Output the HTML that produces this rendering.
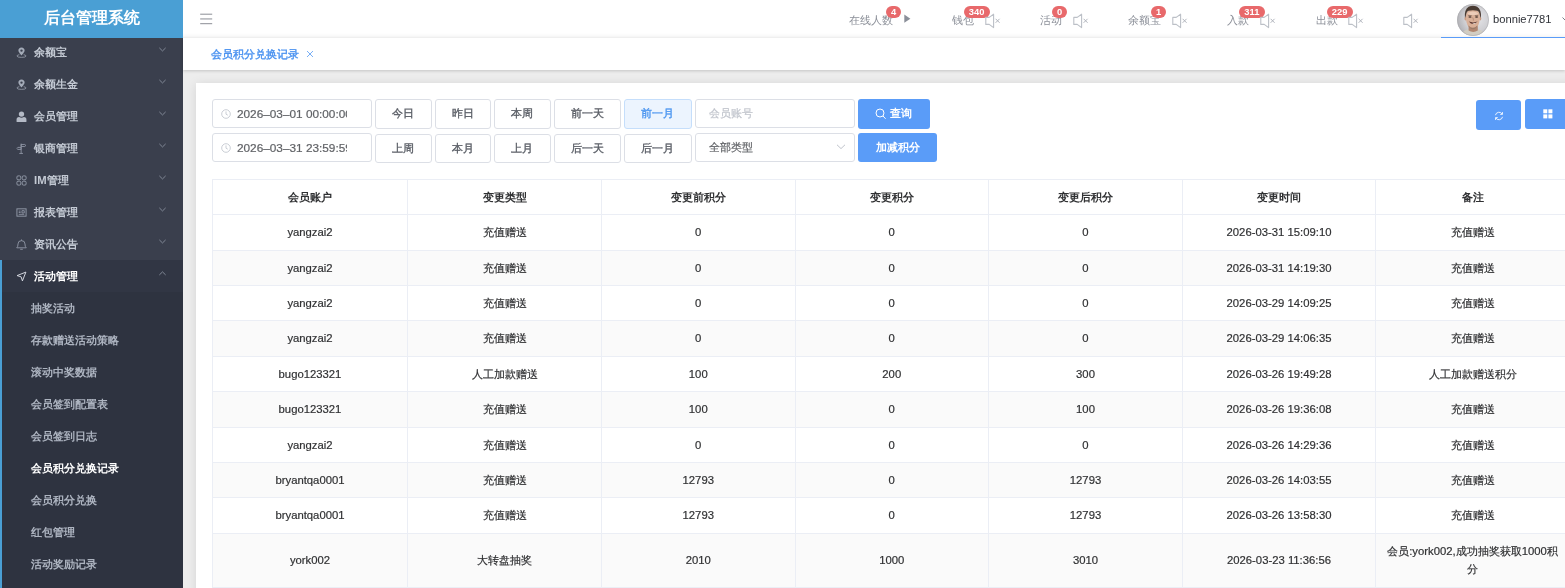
<!DOCTYPE html>
<html lang="zh">
<head>
<meta charset="utf-8">
<title>后台管理系统</title>
<style>
*{box-sizing:border-box;margin:0;padding:0}
html,body{width:1565px;height:588px;overflow:hidden;background:#ededed;font-family:"Liberation Sans",sans-serif;font-size:11.3px;color:#303133}
.abs{position:absolute}
.td,.inp{-webkit-text-stroke:0.2px}
#root{position:absolute;left:0;top:0;width:1565px;height:588px;overflow:hidden;will-change:transform;transform:translateZ(0)}
/* sidebar */
#side{position:absolute;left:0;top:0;width:183px;height:588px;background:#3a3f4d;overflow:hidden}
#logo{position:absolute;left:0;top:0;width:183px;z-index:2;height:38px;background:#4a9fd4;color:#fff;font-weight:bold;font-size:16px;line-height:36px;text-align:center}
#menu{position:absolute;left:0;top:36px;width:183px}
.mi{position:relative;height:32px;line-height:33px;color:#c3c9d3;font-weight:bold;font-size:11.3px;padding-left:34px}
.mi svg.ic{position:absolute;left:15.5px;top:10.5px;width:11px;height:11px}
.mi svg.ar{position:absolute;left:157.8px;top:9px;width:9px;height:9px}
.mi.act{color:#fff;background:#313644}
#actbar{position:absolute;left:0;top:224px;width:2px;height:400px;background:#4a9fd4;z-index:3}
#sub{background:#2e3340;height:400px}
.si{height:32px;line-height:33px;padding-left:31px;color:#adb4c0;font-weight:bold;font-size:11.3px}
.si.on{color:#fff}
/* topbar */
#top{position:absolute;left:183px;top:0;width:1382px;height:38px;background:linear-gradient(to bottom,#fff 0,#fff 33px,#f6f6f6 37.5px,#fafafa 38px)}
#tabs{position:absolute;left:183px;top:38px;width:1382px;height:32px;background:#fff;box-shadow:0 1px 3px rgba(0,0,0,.18)}
#tabs .t{position:absolute;left:28px;top:0;line-height:32px;color:#4a92f0;-webkit-text-stroke:0.4px #4a92f0;font-size:11.3px}
.tx{position:absolute;top:0;line-height:40px;color:#8c9099;font-size:11.3px;white-space:nowrap}
.bd{position:absolute;top:5.8px;height:12.2px;border-radius:6.1px;background:#e8696b;color:#fff;font-size:9.4px;font-weight:bold;line-height:11.6px;text-align:center;padding:0 4px}
/* card */
#card{position:absolute;left:196px;top:83px;width:1400px;height:520px;background:#fff;box-shadow:0 1px 10px rgba(0,0,0,.1)}
.inp{position:absolute;height:28px;border:1px solid #dcdfe6;border-radius:3px;background:#fff;font-size:11.3px;line-height:26px;color:#606266;white-space:nowrap;overflow:hidden}
.btn{position:absolute;height:28px;border:1px solid #dcdfe6;border-radius:3px;background:#fff;font-size:11.3px;line-height:26px;color:#5a5e66;text-align:center;-webkit-text-stroke:0.35px #5a5e66}
.btn.sel{color:#4a95f0;background:#ecf4fe;border-color:#c5defb;-webkit-text-stroke:0.35px #4a95f0}
.pbtn{position:absolute;border-radius:3px;background:#5a9cf8;color:#fff;font-weight:bold;font-size:11.3px;text-align:center}
table{position:absolute;left:212px;top:180px;border-collapse:collapse;table-layout:fixed;width:1356px}
td,th{border:1px solid #ebeef5;text-align:center;font-size:11.3px;color:#303133;padding:0;font-weight:normal;height:35.3px}
th{font-weight:bold;height:34px}
tr.s td{background:#fafafa}

#tb{position:absolute;left:212px;top:0;width:1360px;height:588px}
.tr{position:absolute;left:0;width:1360px}
.td{position:absolute;top:0;height:100%;border:1px solid #ebeef5;display:flex;align-items:center;justify-content:center;text-align:center;font-size:11.3px;color:#303133;line-height:18px;padding:0 9px 2px}
.tr.th .td{font-weight:bold;padding-bottom:0;-webkit-text-stroke:0}
.tr.s .td{background:#fafafa}
.tr.k .td{padding-bottom:0}
</style>
</head>
<body>
<div id="root">
<div id="side">
<div id="logo">后台管理系统</div>
<div id="menu">
<div class="mi"><svg class="ic" viewBox="0 0 12 12"><path d="M6 0.6 C3.9 0.6 2.6 2.1 2.6 3.9 C2.6 5.9 6 9.3 6 9.3 C6 9.3 9.4 5.9 9.4 3.9 C9.4 2.1 8.1 0.6 6 0.6 Z M6 2.6 A1.3 1.3 0 1 1 6 5.2 A1.3 1.3 0 1 1 6 2.6 Z" fill="#a4abb8" fill-rule="evenodd"/><path d="M3.6 8.4 Q1 8.9 1 9.9 Q1 11.3 6 11.3 Q11 11.3 11 9.9 Q11 8.9 8.4 8.4" fill="none" stroke="#a4abb8" stroke-width="0.8"/></svg>余额宝<svg class="ar" viewBox="0 0 10 10"><path d="M1.5 3.2 L5 6.6 L8.5 3.2" fill="none" stroke="#858c9a" stroke-width="1.05"/></svg></div>
<div class="mi"><svg class="ic" viewBox="0 0 12 12"><path d="M6 0.6 C3.9 0.6 2.6 2.1 2.6 3.9 C2.6 5.9 6 9.3 6 9.3 C6 9.3 9.4 5.9 9.4 3.9 C9.4 2.1 8.1 0.6 6 0.6 Z M6 2.6 A1.3 1.3 0 1 1 6 5.2 A1.3 1.3 0 1 1 6 2.6 Z" fill="#a4abb8" fill-rule="evenodd"/><path d="M3.6 8.4 Q1 8.9 1 9.9 Q1 11.3 6 11.3 Q11 11.3 11 9.9 Q11 8.9 8.4 8.4" fill="none" stroke="#a4abb8" stroke-width="0.8"/></svg>余额生金<svg class="ar" viewBox="0 0 10 10"><path d="M1.5 3.2 L5 6.6 L8.5 3.2" fill="none" stroke="#858c9a" stroke-width="1.05"/></svg></div>
<div class="mi"><svg class="ic" viewBox="0 0 12 12"><circle cx="6" cy="3.4" r="2.9" fill="#b4bac6"/><path d="M0.6 11.4 V9.6 Q0.6 6.8 3.4 6.6 Q6 8 8.6 6.6 Q11.4 6.8 11.4 9.6 V11.4 Q11.4 12 10.6 12 H1.4 Q0.6 12 0.6 11.4 Z" fill="#b4bac6"/></svg>会员管理<svg class="ar" viewBox="0 0 10 10"><path d="M1.5 3.2 L5 6.6 L8.5 3.2" fill="none" stroke="#858c9a" stroke-width="1.05"/></svg></div>
<div class="mi"><svg class="ic" viewBox="0 0 12 12"><path d="M5.6 0.6 V11.4 M3.6 11.4 H7.6" fill="none" stroke="#959cab" stroke-width="0.9"/><path d="M5.6 1.6 H9.6 L10.8 2.7 L9.6 3.8 H5.6 Z" fill="none" stroke="#959cab" stroke-width="0.9" stroke-linejoin="round"/><path d="M5.6 4.8 H2 L0.9 5.9 L2 7 H5.6 Z" fill="none" stroke="#959cab" stroke-width="0.9" stroke-linejoin="round"/></svg>银商管理<svg class="ar" viewBox="0 0 10 10"><path d="M1.5 3.2 L5 6.6 L8.5 3.2" fill="none" stroke="#858c9a" stroke-width="1.05"/></svg></div>
<div class="mi"><svg class="ic" viewBox="0 0 12 12"><rect x="1" y="1" width="4.2" height="4.2" rx="1.2" fill="none" stroke="#959cab" stroke-width="1"/><rect x="6.8" y="1" width="4.2" height="4.2" rx="1.2" fill="none" stroke="#959cab" stroke-width="1"/><rect x="1" y="6.8" width="4.2" height="4.2" rx="1.2" fill="none" stroke="#959cab" stroke-width="1"/><rect x="6.8" y="6.8" width="4.2" height="4.2" rx="1.2" fill="none" stroke="#959cab" stroke-width="1"/></svg>IM管理<svg class="ar" viewBox="0 0 10 10"><path d="M1.5 3.2 L5 6.6 L8.5 3.2" fill="none" stroke="#858c9a" stroke-width="1.05"/></svg></div>
<div class="mi"><svg class="ic" viewBox="0 0 12 12"><rect x="1" y="2" width="10" height="8" fill="none" stroke="#959cab" stroke-width="1"/><path d="M3 4.5 H5 M3 6 H5 M6.5 4 H9 V6.5 H6.5 Z M3 8 H9" fill="none" stroke="#959cab" stroke-width="0.9"/></svg>报表管理<svg class="ar" viewBox="0 0 10 10"><path d="M1.5 3.2 L5 6.6 L8.5 3.2" fill="none" stroke="#858c9a" stroke-width="1.05"/></svg></div>
<div class="mi"><svg class="ic" viewBox="0 0 12 12"><path d="M0.8 9.6 Q2.2 8.6 2.2 5.4 Q2.2 1.8 6 1.8 Q9.8 1.8 9.8 5.4 Q9.8 8.6 11.2 9.6 Z" fill="none" stroke="#959cab" stroke-width="0.95" stroke-linejoin="round"/><path d="M4.6 11.2 H7.4 M6 0.5 V1.8" stroke="#959cab" stroke-width="0.95"/></svg>资讯公告<svg class="ar" viewBox="0 0 10 10"><path d="M1.5 3.2 L5 6.6 L8.5 3.2" fill="none" stroke="#858c9a" stroke-width="1.05"/></svg></div>
<div class="mi act"><svg class="ic" viewBox="0 0 12 12"><path d="M1.2 5 L10.8 1.2 L7 10.8 L5.6 6.4 Z" fill="none" stroke="#dfe3ea" stroke-width="1" stroke-linejoin="round"/></svg>活动管理<svg class="ar" viewBox="0 0 10 10"><path d="M1.5 6.6 L5 3.2 L8.5 6.6" fill="none" stroke="#858c9a" stroke-width="1.05"/></svg></div>
<div id="actbar"></div>
<div id="sub">
<div class="si">抽奖活动</div>
<div class="si">存款赠送活动策略</div>
<div class="si">滚动中奖数据</div>
<div class="si">会员签到配置表</div>
<div class="si">会员签到日志</div>
<div class="si on">会员积分兑换记录</div>
<div class="si">会员积分兑换</div>
<div class="si">红包管理</div>
<div class="si">活动奖励记录</div>
</div>
</div>
</div>
<div id="top">
<svg class="abs" style="left:17px;top:13px" width="13" height="12" viewBox="0 0 13 12"><path d="M0.2 1.2 H12.2 M0.2 5.95 H12.2 M0.2 10.7 H12.2" stroke="#85888f" stroke-width="0.95"/></svg>
<span class="tx" style="left:665.6px">在线人数</span>
<span class="bd" style="left:703px;width:15px">4</span>
<svg class="abs" style="left:721px;top:14px" width="7" height="10" viewBox="0 0 7 10"><path d="M0.3 0.6 L6.4 4.7 L0.3 8.8 Z" fill="#8a8f99"/></svg>
<span class="tx" style="left:769px">钱包</span>
<span class="bd" style="left:780.5px;width:26.2px">340</span>
<svg class="abs" style="left:802.1px;top:13px" width="17" height="16" viewBox="0 0 17 16"><path d="M0.8 4.4 H4.2 L8.6 1.2 V14.6 L4.2 11.4 H0.8 Z" fill="none" stroke="#bcc0c7" stroke-width="1.1" stroke-linejoin="round"/><path d="M10.6 5.8 L14.6 9.8 M14.6 5.8 L10.6 9.8" stroke="#a9adb6" stroke-width="0.9"/></svg>
<span class="tx" style="left:856.7px">活动</span>
<span class="bd" style="left:869px;width:15px">0</span>
<svg class="abs" style="left:890.3px;top:13px" width="17" height="16" viewBox="0 0 17 16"><path d="M0.8 4.4 H4.2 L8.6 1.2 V14.6 L4.2 11.4 H0.8 Z" fill="none" stroke="#bcc0c7" stroke-width="1.1" stroke-linejoin="round"/><path d="M10.6 5.8 L14.6 9.8 M14.6 5.8 L10.6 9.8" stroke="#a9adb6" stroke-width="0.9"/></svg>
<span class="tx" style="left:945px">余额宝</span>
<span class="bd" style="left:968px;width:15px">1</span>
<svg class="abs" style="left:989.1px;top:13px" width="17" height="16" viewBox="0 0 17 16"><path d="M0.8 4.4 H4.2 L8.6 1.2 V14.6 L4.2 11.4 H0.8 Z" fill="none" stroke="#bcc0c7" stroke-width="1.1" stroke-linejoin="round"/><path d="M10.6 5.8 L14.6 9.8 M14.6 5.8 L10.6 9.8" stroke="#a9adb6" stroke-width="0.9"/></svg>
<span class="tx" style="left:1043.8px">入款</span>
<span class="bd" style="left:1055.7px;width:26.2px">311</span>
<svg class="abs" style="left:1077.3px;top:13px" width="17" height="16" viewBox="0 0 17 16"><path d="M0.8 4.4 H4.2 L8.6 1.2 V14.6 L4.2 11.4 H0.8 Z" fill="none" stroke="#bcc0c7" stroke-width="1.1" stroke-linejoin="round"/><path d="M10.6 5.8 L14.6 9.8 M14.6 5.8 L10.6 9.8" stroke="#a9adb6" stroke-width="0.9"/></svg>
<span class="tx" style="left:1132.7px">出款</span>
<span class="bd" style="left:1143.6px;width:26.2px">229</span>
<svg class="abs" style="left:1165.3px;top:13px" width="17" height="16" viewBox="0 0 17 16"><path d="M0.8 4.4 H4.2 L8.6 1.2 V14.6 L4.2 11.4 H0.8 Z" fill="none" stroke="#bcc0c7" stroke-width="1.1" stroke-linejoin="round"/><path d="M10.6 5.8 L14.6 9.8 M14.6 5.8 L10.6 9.8" stroke="#a9adb6" stroke-width="0.9"/></svg>
<svg class="abs" style="left:1220.1px;top:13px" width="17" height="16" viewBox="0 0 17 16"><path d="M0.8 4.4 H4.2 L8.6 1.2 V14.6 L4.2 11.4 H0.8 Z" fill="none" stroke="#bcc0c7" stroke-width="1.1" stroke-linejoin="round"/><path d="M10.6 5.8 L14.6 9.8 M14.6 5.8 L10.6 9.8" stroke="#a9adb6" stroke-width="0.9"/></svg>
<svg class="abs" style="left:1274px;top:4px" width="32" height="32" viewBox="0 0 32 32"><defs><clipPath id="av"><circle cx="16" cy="16" r="15.9"/></clipPath><radialGradient id="avg" cx="62%" cy="45%" r="65%"><stop offset="0" stop-color="#e6e6e9"/><stop offset="0.6" stop-color="#cfcfd3"/><stop offset="1" stop-color="#aeaeb2"/></radialGradient><filter id="avb" x="-10%" y="-10%" width="120%" height="120%"><feGaussianBlur stdDeviation="0.65"/></filter></defs><g clip-path="url(#av)"><rect width="32" height="32" fill="url(#avg)"/><g filter="url(#avb)"><path d="M3 33 Q4.5 27 10.5 25.4 L22 25.4 Q27.5 27 29 33 Z" fill="#d2cdc2"/><path d="M11.6 22 H20.8 V26.6 Q16.2 29.2 11.6 26.6 Z" fill="#b08670"/><ellipse cx="8.6" cy="14.6" rx="1.1" ry="1.9" fill="#c99c84"/><ellipse cx="23.2" cy="14.6" rx="1.1" ry="1.9" fill="#c99c84"/><path d="M8.8 12 Q8.8 5.4 15.9 5.4 Q22.9 5.4 22.9 12 Q22.9 19 20.4 22.6 Q18.4 25 15.9 25 Q13.4 25 11.4 22.6 Q8.8 19 8.8 12 Z" fill="#d9b098"/><path d="M10.4 9 Q15.9 6 21.4 9 Q21 11 15.9 11 Q10.8 11 10.4 9Z" fill="#ecccb8"/><path d="M11.2 21.2 Q15.9 26.4 20.6 21.2 Q19.6 25 15.9 25.2 Q12.2 25 11.2 21.2Z" fill="#9c7a67"/><path d="M7.9 13.6 Q7.2 5.6 11.6 2.8 Q15.9 0.8 20.2 2.8 Q24.6 5.6 23.9 13.6 Q23.3 13.6 22.9 11.4 Q22.4 7.6 20.2 6.8 Q15.9 5.8 11.6 6.8 Q9.4 7.6 8.9 11.4 Q8.5 13.6 7.9 13.6 Z" fill="#4a3b32"/><ellipse cx="13" cy="13" rx="1.6" ry="0.8" fill="#4a372f"/><ellipse cx="19.6" cy="13" rx="1.6" ry="0.8" fill="#4a372f"/><path d="M11.2 11.5 H14.6 M17.8 11.5 H21.2" stroke="#6b5246" stroke-width="0.6"/><path d="M15.6 13.4 Q16.8 15.4 16.4 16.6" stroke="#b48a74" stroke-width="0.9" fill="none"/><path d="M11.8 17.6 Q16 22.6 20.6 17.6 Q16.4 19.2 11.8 17.6Z" fill="#5e3a33"/><path d="M15 18.7 Q17.6 19.6 20 18.2 Q18 20.8 15 18.7Z" fill="#fbf7f4"/></g></g><circle cx="16" cy="16" r="15.6" fill="none" stroke="#a9a9ad" stroke-width="0.5"/></svg>
<span class="tx" style="left:1310px;color:#2f3238;line-height:39px;font-size:11.2px">bonnie7781</span>
<svg class="abs" style="left:1379px;top:16px" width="10" height="8" viewBox="0 0 10 8"><path d="M0.5 1.5 L5 6 L9.5 1.5" fill="none" stroke="#777b84" stroke-width="1"/></svg>
<div class="abs" style="left:1258px;top:36.6px;width:124px;height:1.5px;background:#5a9cf8;z-index:5"></div>
</div>
<div id="tabs"><span class="t">会员积分兑换记录</span><svg class="abs" style="left:123px;top:12px" width="8" height="8" viewBox="0 0 8 8"><path d="M1 1 L7 7 M7 1 L1 7" stroke="#6aa6f5" stroke-width="0.9"/></svg></div>
<div id="card"></div>
<div id="filters">
<div class="inp" style="left:212px;top:99px;height:28.5px;width:160px"><svg class="abs" style="left:8px;top:9px" width="10" height="10" viewBox="0 0 10 10"><circle cx="5" cy="5" r="4.3" fill="none" stroke="#c4c8d0" stroke-width="0.9"/><path d="M5 2.4 V5.2 L6.8 6.2" fill="none" stroke="#c4c8d0" stroke-width="0.9"/></svg><span class="abs" style="left:24px;top:0;width:109.8px;overflow:hidden;font-size:11.8px;line-height:28.5px">2026–03–01 00:00:00</span></div>
<div class="inp" style="left:212px;top:133.3px;height:28.3px;width:160px"><svg class="abs" style="left:8px;top:9px" width="10" height="10" viewBox="0 0 10 10"><circle cx="5" cy="5" r="4.3" fill="none" stroke="#c4c8d0" stroke-width="0.9"/><path d="M5 2.4 V5.2 L6.8 6.2" fill="none" stroke="#c4c8d0" stroke-width="0.9"/></svg><span class="abs" style="left:24px;top:0;width:109.8px;overflow:hidden;font-size:11.8px;line-height:28.5px">2026–03–31 23:59:59</span></div>
<div class="btn" style="left:375px;top:99px;height:29.5px;line-height:27px;width:56.5px">今日</div>
<div class="btn" style="left:435px;top:99px;height:29.5px;line-height:27px;width:56px">昨日</div>
<div class="btn" style="left:494px;top:99px;height:29.5px;line-height:27px;width:56.5px">本周</div>
<div class="btn" style="left:554px;top:99px;height:29.5px;line-height:27px;width:66.5px">前一天</div>
<div class="btn sel" style="left:624px;top:99px;height:29.5px;line-height:27px;width:67.5px">前一月</div>
<div class="btn" style="left:375px;top:134px;height:29px;line-height:26.5px;width:56.5px">上周</div>
<div class="btn" style="left:435px;top:134px;height:29px;line-height:26.5px;width:56px">本月</div>
<div class="btn" style="left:494px;top:134px;height:29px;line-height:26.5px;width:56.5px">上月</div>
<div class="btn" style="left:554px;top:134px;height:29px;line-height:26.5px;width:66.5px">后一天</div>
<div class="btn" style="left:624px;top:134px;height:29px;line-height:26.5px;width:67.5px">后一月</div>
<div class="inp" style="left:695px;top:99px;height:28.5px;width:159.5px"><span class="abs" style="left:13px;top:0;color:#c0c4cc">会员账号</span></div>
<div class="inp" style="left:695px;top:133.3px;height:28.3px;width:159.5px"><span class="abs" style="left:13px;top:0;color:#606266">全部类型</span><svg class="abs" style="left:140px;top:9px" width="10" height="8" viewBox="0 0 10 8"><path d="M1 1.8 L5 5.6 L9 1.8" fill="none" stroke="#c0c4cc" stroke-width="1"/></svg></div>
<div class="pbtn" style="left:858px;top:99px;width:72px;height:29.5px;line-height:29.5px"><svg class="abs" style="left:17px;top:9px" width="12" height="12" viewBox="0 0 12 12"><circle cx="5" cy="5" r="4" fill="none" stroke="#fff" stroke-width="1"/><path d="M8 8 L10.6 10.8" stroke="#fff" stroke-width="1"/></svg><span class="abs" style="left:32px;top:0">查询</span></div>
<div class="pbtn" style="left:858px;top:133px;width:79px;height:29px;line-height:29px">加减积分</div>
<div class="pbtn" style="left:1476px;top:100px;width:45px;height:30px"><svg class="abs" style="left:17.5px;top:10.5px" width="10" height="10" viewBox="0 0 11 11"><path d="M1.6 4.6 A4 4 0 0 1 9 3.4 M9.4 6.4 A4 4 0 0 1 2 7.6" fill="none" stroke="#fff" stroke-width="0.95"/><path d="M9.3 1.2 V3.7 H6.8 M1.7 9.8 V7.3 H4.2" fill="none" stroke="#fff" stroke-width="0.95"/></svg></div>
<div class="pbtn" style="left:1525px;top:98.5px;width:45px;height:30px"><svg class="abs" style="left:17.7px;top:10.6px" width="10" height="10" viewBox="0 0 10 10"><rect x="0.3" y="0.3" width="4" height="4" fill="#fff"/><rect x="5.4" y="0.3" width="4" height="4" fill="#fff"/><rect x="0.3" y="5.4" width="4" height="4" fill="#fff"/><rect x="5.4" y="5.4" width="4" height="4" fill="#fff"/></svg></div>
</div>
<div id="tb">
<div class="tr th" style="top:179px;height:36px"><div class="td" style="left:0px;width:196px"><span>会员账户</span></div><div class="td" style="left:195px;width:195px"><span>变更类型</span></div><div class="td" style="left:389px;width:194.5px"><span>变更前积分</span></div><div class="td" style="left:582.5px;width:194.5px"><span>变更积分</span></div><div class="td" style="left:776px;width:195px"><span>变更后积分</span></div><div class="td" style="left:970px;width:194px"><span>变更时间</span></div><div class="td" style="left:1163px;width:195px"><span>备注</span></div></div>
<div class="tr" style="top:214px;height:37px"><div class="td" style="left:0px;width:196px"><span>yangzai2</span></div><div class="td" style="left:195px;width:195px"><span>充值赠送</span></div><div class="td" style="left:389px;width:194.5px"><span>0</span></div><div class="td" style="left:582.5px;width:194.5px"><span>0</span></div><div class="td" style="left:776px;width:195px"><span>0</span></div><div class="td" style="left:970px;width:194px"><span>2026-03-31 15:09:10</span></div><div class="td" style="left:1163px;width:195px"><span>充值赠送</span></div></div>
<div class="tr s k" style="top:250px;height:36px"><div class="td" style="left:0px;width:196px"><span>yangzai2</span></div><div class="td" style="left:195px;width:195px"><span>充值赠送</span></div><div class="td" style="left:389px;width:194.5px"><span>0</span></div><div class="td" style="left:582.5px;width:194.5px"><span>0</span></div><div class="td" style="left:776px;width:195px"><span>0</span></div><div class="td" style="left:970px;width:194px"><span>2026-03-31 14:19:30</span></div><div class="td" style="left:1163px;width:195px"><span>充值赠送</span></div></div>
<div class="tr k" style="top:285px;height:36px"><div class="td" style="left:0px;width:196px"><span>yangzai2</span></div><div class="td" style="left:195px;width:195px"><span>充值赠送</span></div><div class="td" style="left:389px;width:194.5px"><span>0</span></div><div class="td" style="left:582.5px;width:194.5px"><span>0</span></div><div class="td" style="left:776px;width:195px"><span>0</span></div><div class="td" style="left:970px;width:194px"><span>2026-03-29 14:09:25</span></div><div class="td" style="left:1163px;width:195px"><span>充值赠送</span></div></div>
<div class="tr s" style="top:320px;height:37px"><div class="td" style="left:0px;width:196px"><span>yangzai2</span></div><div class="td" style="left:195px;width:195px"><span>充值赠送</span></div><div class="td" style="left:389px;width:194.5px"><span>0</span></div><div class="td" style="left:582.5px;width:194.5px"><span>0</span></div><div class="td" style="left:776px;width:195px"><span>0</span></div><div class="td" style="left:970px;width:194px"><span>2026-03-29 14:06:35</span></div><div class="td" style="left:1163px;width:195px"><span>充值赠送</span></div></div>
<div class="tr k" style="top:356px;height:36px"><div class="td" style="left:0px;width:196px"><span>bugo123321</span></div><div class="td" style="left:195px;width:195px"><span>人工加款赠送</span></div><div class="td" style="left:389px;width:194.5px"><span>100</span></div><div class="td" style="left:582.5px;width:194.5px"><span>200</span></div><div class="td" style="left:776px;width:195px"><span>300</span></div><div class="td" style="left:970px;width:194px"><span>2026-03-26 19:49:28</span></div><div class="td" style="left:1163px;width:195px"><span>人工加款赠送积分</span></div></div>
<div class="tr s" style="top:391px;height:37px"><div class="td" style="left:0px;width:196px"><span>bugo123321</span></div><div class="td" style="left:195px;width:195px"><span>充值赠送</span></div><div class="td" style="left:389px;width:194.5px"><span>100</span></div><div class="td" style="left:582.5px;width:194.5px"><span>0</span></div><div class="td" style="left:776px;width:195px"><span>100</span></div><div class="td" style="left:970px;width:194px"><span>2026-03-26 19:36:08</span></div><div class="td" style="left:1163px;width:195px"><span>充值赠送</span></div></div>
<div class="tr k" style="top:427px;height:36px"><div class="td" style="left:0px;width:196px"><span>yangzai2</span></div><div class="td" style="left:195px;width:195px"><span>充值赠送</span></div><div class="td" style="left:389px;width:194.5px"><span>0</span></div><div class="td" style="left:582.5px;width:194.5px"><span>0</span></div><div class="td" style="left:776px;width:195px"><span>0</span></div><div class="td" style="left:970px;width:194px"><span>2026-03-26 14:29:36</span></div><div class="td" style="left:1163px;width:195px"><span>充值赠送</span></div></div>
<div class="tr s k" style="top:462px;height:36px"><div class="td" style="left:0px;width:196px"><span>bryantqa0001</span></div><div class="td" style="left:195px;width:195px"><span>充值赠送</span></div><div class="td" style="left:389px;width:194.5px"><span>12793</span></div><div class="td" style="left:582.5px;width:194.5px"><span>0</span></div><div class="td" style="left:776px;width:195px"><span>12793</span></div><div class="td" style="left:970px;width:194px"><span>2026-03-26 14:03:55</span></div><div class="td" style="left:1163px;width:195px"><span>充值赠送</span></div></div>
<div class="tr" style="top:497px;height:37px"><div class="td" style="left:0px;width:196px"><span>bryantqa0001</span></div><div class="td" style="left:195px;width:195px"><span>充值赠送</span></div><div class="td" style="left:389px;width:194.5px"><span>12793</span></div><div class="td" style="left:582.5px;width:194.5px"><span>0</span></div><div class="td" style="left:776px;width:195px"><span>12793</span></div><div class="td" style="left:970px;width:194px"><span>2026-03-26 13:58:30</span></div><div class="td" style="left:1163px;width:195px"><span>充值赠送</span></div></div>
<div class="tr s" style="top:533px;height:55px"><div class="td" style="left:0px;width:196px"><span>york002</span></div><div class="td" style="left:195px;width:195px"><span>大转盘抽奖</span></div><div class="td" style="left:389px;width:194.5px"><span>2010</span></div><div class="td" style="left:582.5px;width:194.5px"><span>1000</span></div><div class="td" style="left:776px;width:195px"><span>3010</span></div><div class="td" style="left:970px;width:194px"><span>2026-03-23 11:36:56</span></div><div class="td" style="left:1163px;width:195px"><span>会员:york002,成功抽奖获取1000积分</span></div></div>
</div>
</div>
</body>
</html>
